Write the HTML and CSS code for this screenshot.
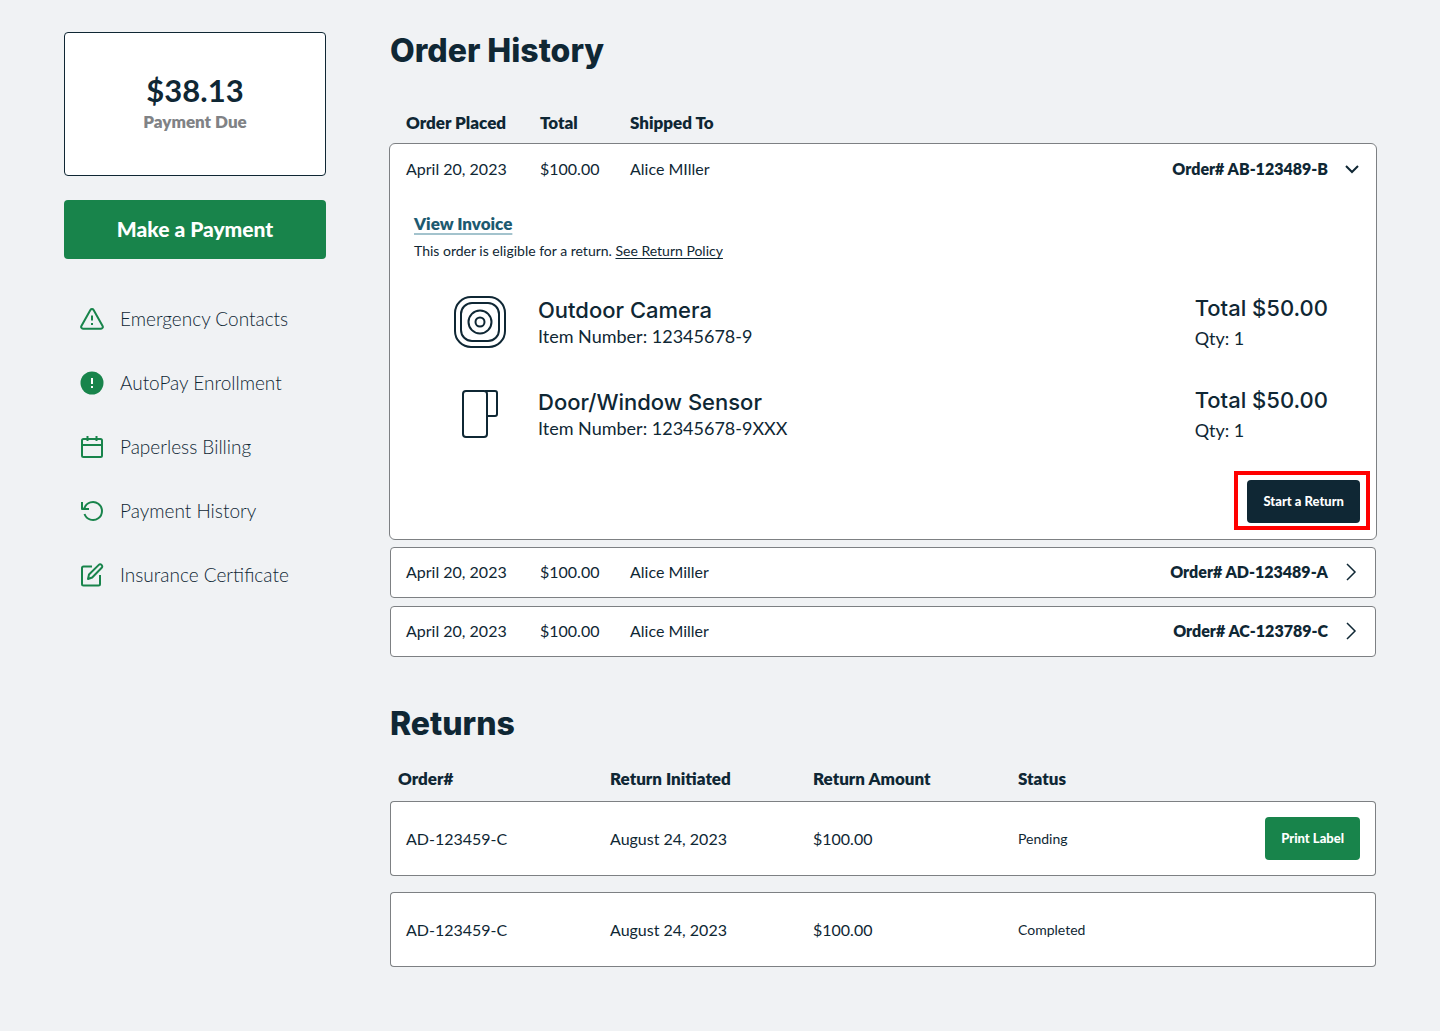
FILE: index.html
```html
<!DOCTYPE html>
<html lang="en">
<head>
<meta charset="utf-8">
<meta name="viewport" content="width=device-width, initial-scale=1">
<title>Order History</title>
<link rel="stylesheet" href="styles.css">
</head>
<body>
<div class="page">
  <aside class="sidebar">
    <section class="balance">
      <p class="balance-amount">$38.13</p>
      <p class="balance-label">Payment Due</p>
    </section>
    <button type="button" class="button button-large">Make a Payment</button>
    <nav class="menu" aria-label="Account">
      <a href="#" class="menu-link">
        <svg class="menu-icon" viewBox="0 0 24 24" aria-hidden="true"><path d="M10.4 2.9 1.4 19a1.8 1.8 0 0 0 1.6 2.7h18a1.8 1.8 0 0 0 1.6-2.7L13.6 2.9a1.85 1.85 0 0 0-3.2 0z"/><path d="M12 8.500v5M12 16v2"/></svg>
        Emergency Contacts
      </a>
      <a href="#" class="menu-link">
        <svg class="menu-icon" viewBox="0 0 24 24" aria-hidden="true"><circle class="disc" cx="12" cy="12" r="11.5"/><path class="mark" d="M12 7v6M12 15v2"/></svg>
        AutoPay Enrollment
      </a>
      <a href="#" class="menu-link">
        <svg class="menu-icon" viewBox="0 0 24 24" aria-hidden="true"><rect x="2" y="4" width="20" height="18" rx="1.5"/><path d="M2 10h20M7.5 1v5M16.5 1v5"/></svg>
        Paperless Billing
      </a>
      <a href="#" class="menu-link">
        <svg class="menu-icon" viewBox="0 0 24 24" aria-hidden="true"><path d="M2 3v7h7"/><path d="M3 10 4.500 9A9 9 0 1 1 4.500 15"/></svg>
        Payment History
      </a>
      <a href="#" class="menu-link">
        <svg class="menu-icon" viewBox="0 0 24 24" aria-hidden="true"><path d="M12 3.5H3.5A1.5 1.5 0 0 0 2 5v16a1.5 1.5 0 0 0 1.5 1.5h15A1.5 1.5 0 0 0 20 21v-9"/><path d="m8 16 1-4.5L18.8 1.9a1.9 1.9 0 0 1 2.7 0l.2.2a1.9 1.9 0 0 1 0 2.7L12.2 14.500z"/></svg>
        Insurance Certificate
      </a>
    </nav>
  </aside>

  <main class="content">
    <section class="orders">
      <h1 class="heading">Order History</h1>
      <div class="order-head">
        <span>Order Placed</span>
        <span>Total</span>
        <span>Shipped To</span>
      </div>
      <div class="order-list">
        <details class="order order-open" open>
          <summary class="order-row">
            <span>April 20, 2023</span>
            <span>$100.00</span>
            <span>Alice MIller</span>
            <strong class="order-number">Order# AB-123489-B</strong>
            <svg class="chevron chevron-bold" viewBox="0 0 16 16" aria-hidden="true"><path d="m2 5 6 6 6-6"/></svg>
          </summary>
          <div class="order-body">
            <a href="#" class="invoice-link">View Invoice</a>
            <p class="note">This order is eligible for a return. <a href="#" class="policy-link">See Return Policy</a></p>
            <ul class="items">
              <li class="item">
                <svg class="item-icon" viewBox="0 0 52 52" aria-hidden="true"><rect x="1" y="1" width="50" height="50" rx="16"/><rect x="7" y="7" width="38" height="38" rx="11"/><circle cx="26" cy="26" r="11.5"/><circle cx="26" cy="26" r="4.5"/></svg>
                <div class="item-info">
                  <h2 class="item-title">Outdoor Camera</h2>
                  <p class="item-detail">Item Number: 12345678-9</p>
                </div>
                <div class="item-price">
                  <p class="item-title">Total $50.00</p>
                  <p class="item-detail">Qty: 1</p>
                </div>
              </li>
              <li class="item">
                <svg class="item-icon" viewBox="0 0 52 52" aria-hidden="true"><rect x="9" y="3" width="24" height="46" rx="3"/><path d="M31 3h10a2 2 0 0 1 2 2v21a2 2 0 0 1-2 2h-8"/></svg>
                <div class="item-info">
                  <h2 class="item-title">Door/Window Sensor</h2>
                  <p class="item-detail">Item Number: 12345678-9XXX</p>
                </div>
                <div class="item-price">
                  <p class="item-title">Total $50.00</p>
                  <p class="item-detail">Qty: 1</p>
                </div>
              </li>
            </ul>
            <div class="order-actions">
              <button type="button" class="button button-dark">Start a Return</button>
            </div>
          </div>
        </details>
        <details class="order">
          <summary class="order-row">
            <span>April 20, 2023</span>
            <span>$100.00</span>
            <span>Alice Miller</span>
            <strong class="order-number">Order# AD-123489-A</strong>
            <svg class="chevron" viewBox="0 0 16 16" aria-hidden="true"><path d="m3 0 8 8-8 8"/></svg>
          </summary>
        </details>
        <details class="order">
          <summary class="order-row">
            <span>April 20, 2023</span>
            <span>$100.00</span>
            <span>Alice Miller</span>
            <strong class="order-number">Order# AC-123789-C</strong>
            <svg class="chevron" viewBox="0 0 16 16" aria-hidden="true"><path d="m3 0 8 8-8 8"/></svg>
          </summary>
        </details>
      </div>
    </section>

    <section class="returns">
      <h1 class="heading">Returns</h1>
      <table class="returns-table">
        <colgroup>
          <col class="col-order"><col class="col-date"><col class="col-amount"><col><col class="col-action">
        </colgroup>
        <thead>
          <tr>
            <th scope="col">Order#</th>
            <th scope="col">Return Initiated</th>
            <th scope="col">Return Amount</th>
            <th scope="col">Status</th>
            <td></td>
          </tr>
        </thead>
        <tbody>
          <tr>
            <td>AD-123459-C</td>
            <td>August 24, 2023</td>
            <td>$100.00</td>
            <td class="status">Pending</td>
            <td><button type="button" class="button">Print Label</button></td>
          </tr>
          <tr>
            <td>AD-123459-C</td>
            <td>August 24, 2023</td>
            <td>$100.00</td>
            <td class="status">Completed</td>
            <td></td>
          </tr>
        </tbody>
      </table>
    </section>
  </main>
</div>
</body>
</html>
```
FILE: styles.css
```css
:root {
  --ink: #0f2734;
  --green: #18844b;
  --line: #7d8083;
  --page: #f0f2f4;
}

* {
  box-sizing: border-box;
}

body,
p,
h1,
h2,
ul {
  margin: 0;
  padding: 0;
}

body {
  background: var(--page);
  color: var(--ink);
  font: 400 16px/24px Lato, "Open Sans", sans-serif;
}

svg {
  display: block;
  fill: none;
  stroke: currentColor;
  stroke-width: 2;
  stroke-linejoin: round;
}

.page {
  display: flex;
  align-items: flex-start;
  gap: 64px;
  padding: 32px 64px 48px;
}

.sidebar {
  display: flex;
  flex: 0 0 262px;
  flex-direction: column;
  gap: 24px;
}

.content {
  flex: 1;
  min-width: 0;
}

/* Sidebar */

.balance {
  padding: 37px 16px 41px;
  border: 1px solid var(--ink);
  border-radius: 4px;
  background: #fff;
  text-align: center;
}

.balance-amount {
  font-size: 31px;
  font-weight: 700;
  line-height: 40px;
}

.balance-label {
  color: #808285;
  font-size: 17px;
  font-weight: 800;
}

.button {
  padding: 12px 16px 13px;
  border: 0;
  border-radius: 4px;
  background: var(--green);
  color: #fff;
  font: 900 13px/18px Lato, "Open Sans", sans-serif;
  white-space: nowrap;
  cursor: pointer;
}

.button-large {
  padding: 17px 16px 18px;
  font-size: 21px;
  line-height: 24px;
}

.button-dark {
  background: var(--ink);
}

.menu {
  display: flex;
  flex-direction: column;
  gap: 40px;
  padding: 24px 16px;
}

.menu-link {
  display: flex;
  align-items: center;
  gap: 16px;
  color: var(--ink);
  font-size: 19px;
  font-weight: 300;
  text-decoration: none;
}

.menu-icon {
  width: 24px;
  height: 24px;
  color: var(--green);
}

.disc {
  fill: var(--green);
  stroke: none;
}

.mark {
  stroke: #fff;
}

/* Orders */

.heading {
  font: 800 32px/38px Inter, sans-serif;
}

.order-head,
.order-row {
  display: grid;
  grid-template-columns: 118px 74px 1fr auto 16px;
  column-gap: 16px;
  align-items: center;
}

.order-head {
  padding: 41px 16px 9px;
  font-size: 17px;
  font-weight: 800;
}

.order-list {
  display: flex;
  flex-direction: column;
  gap: 8px;
}

.order {
  border: 1px solid var(--line);
  border-radius: 4px;
  background: #fff;
}

.order-open {
  margin: -1px;
  padding: 1px;
  border-radius: 6px;
}

.order-row {
  padding: 12px 15px 13px;
  cursor: pointer;
  list-style: none;
}

.order-number {
  font-weight: 800;
}

.chevron {
  width: 16px;
  height: 16px;
  overflow: visible;
  stroke-width: 1.5;
  stroke-linejoin: miter;
}

.chevron-bold {
  stroke-width: 2;
}

.order-body {
  padding: 18px 15px 15px 23px;
}

.invoice-link {
  color: #1d5a70;
  font-size: 17px;
  font-weight: 800;
  text-decoration-color: #a3c3cd;
  text-decoration-thickness: 2px;
  text-underline-offset: 3px;
}

.note {
  padding-top: 3px;
  font-size: 14px;
}

.policy-link {
  color: inherit;
  text-underline-offset: 2px;
}

.items {
  display: flex;
  flex-direction: column;
  gap: 36px;
  padding: 31px 32px 38px 40px;
  list-style: none;
}

.item {
  display: flex;
  align-items: center;
  gap: 32px;
}

.item-icon {
  width: 52px;
  height: 52px;
}

.item-info {
  flex: 1;
}

.item-price {
  display: grid;
  gap: 4px;
}

.item-title {
  font: 500 22px/28px Inter, sans-serif;
}

.item-detail {
  font-size: 18px;
}

.order-actions {
  position: relative;
  width: fit-content;
  margin-left: auto;
}

.order-actions::after {
  position: absolute;
  inset: -9px -10px -7px -13px;
  border: 4px solid #f00;
  content: "";
  pointer-events: none;
}

.order-actions .button {
  display: block;
}

/* Returns */

.returns {
  padding-top: 48px;
}

.returns-table {
  width: 100%;
  margin-top: 14px;
  border-collapse: separate;
  border-spacing: 0 16px;
  table-layout: fixed;
}

.col-order {
  width: 220px;
}

.col-date {
  width: 203px;
}

.col-amount {
  width: 205px;
}

.col-action {
  width: 128px;
}

.returns-table th,
.returns-table td {
  padding: 0;
  text-align: left;
}

.returns-table th {
  font-size: 17px;
  font-weight: 800;
  line-height: 12px;
}

.returns-table th:first-child {
  padding-left: 8px;
}

.returns-table tbody td {
  height: 75px;
  border: solid var(--line);
  border-width: 1px 0;
  background: #fff;
}

.returns-table tbody td:first-child {
  padding-left: 15px;
  border-left-width: 1px;
  border-radius: 4px 0 0 4px;
}

.returns-table tbody td:last-child {
  padding-right: 15px;
  border-right-width: 1px;
  border-radius: 0 4px 4px 0;
  text-align: right;
}

.returns-table .status {
  font-size: 14px;
}
```
